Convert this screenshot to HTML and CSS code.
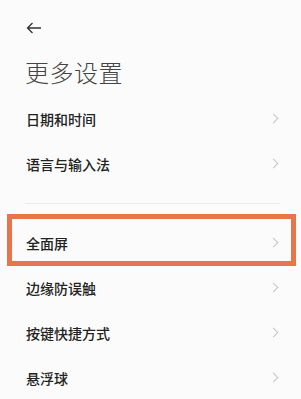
FILE: index.html
```html
<!DOCTYPE html>
<html lang="zh-CN">
<head>
    <meta charset="UTF-8">
    <meta name="viewport" content="width=device-width, initial-scale=1.0">
    <title>更多设置</title>
    <link rel="stylesheet" href="styles.css">
</head>
<body>

<div class="header">
    <svg class="back" width="16" height="12" viewBox="0 0 16 12">
        <path d="M15 6H1.5M6.5 1L1.5 6l5 5" fill="none" stroke="#333" stroke-width="1.3"/>
    </svg>
    <h1>更多设置</h1>
</div>

<ul class="list">
    <li class="item">日期和时间<span class="chevron"></span></li>
    <li class="item">语言与输入法<span class="chevron"></span></li>
</ul>

<div class="divider"></div>

<ul class="list">
    <li class="item highlight">全面屏<span class="chevron"></span></li>
    <li class="item">边缘防误触<span class="chevron"></span></li>
    <li class="item">按键快捷方式<span class="chevron"></span></li>
    <li class="item">悬浮球<span class="chevron"></span></li>
</ul>

</body>
</html>
```

FILE: styles.css
```css
body {
    margin: 0;
    background-color: #fbfbfb;
    font-family: "Noto Sans CJK SC", "Noto Sans", sans-serif;
    color: #222;
    overflow: hidden;
}

.header {
    padding: 22px 0 0 26px;
    height: 74px;
}

.back {
    display: block;
}

h1 {
    margin: 23px 0 0 -1px;
    font-size: 24px;
    font-weight: 300;
    line-height: 30px;
    color: #444;
    letter-spacing: 0.5px;
}

.list {
    list-style: none;
    margin: 0;
    padding: 0;
}

.item {
    position: relative;
    display: flex;
    align-items: center;
    justify-content: space-between;
    height: 45px;
    padding: 0 22px 0 26px;
    font-size: 14px;
    font-weight: 500;
}

.chevron {
    width: 6px;
    height: 6px;
    border-top: 1px solid #c4c4c4;
    border-right: 1px solid #c4c4c4;
    transform: rotate(45deg);
    margin-right: 2px;
}

.divider {
    height: 1px;
    background-color: #ececec;
    margin: 17px 21px 16px 25px;
}

/* orange outline around the selected row */
.highlight::after {
    content: "";
    position: absolute;
    left: 7px;
    right: 5px;
    top: -6px;
    bottom: -1px;
    border: 5px solid #e8744c;
}
```
